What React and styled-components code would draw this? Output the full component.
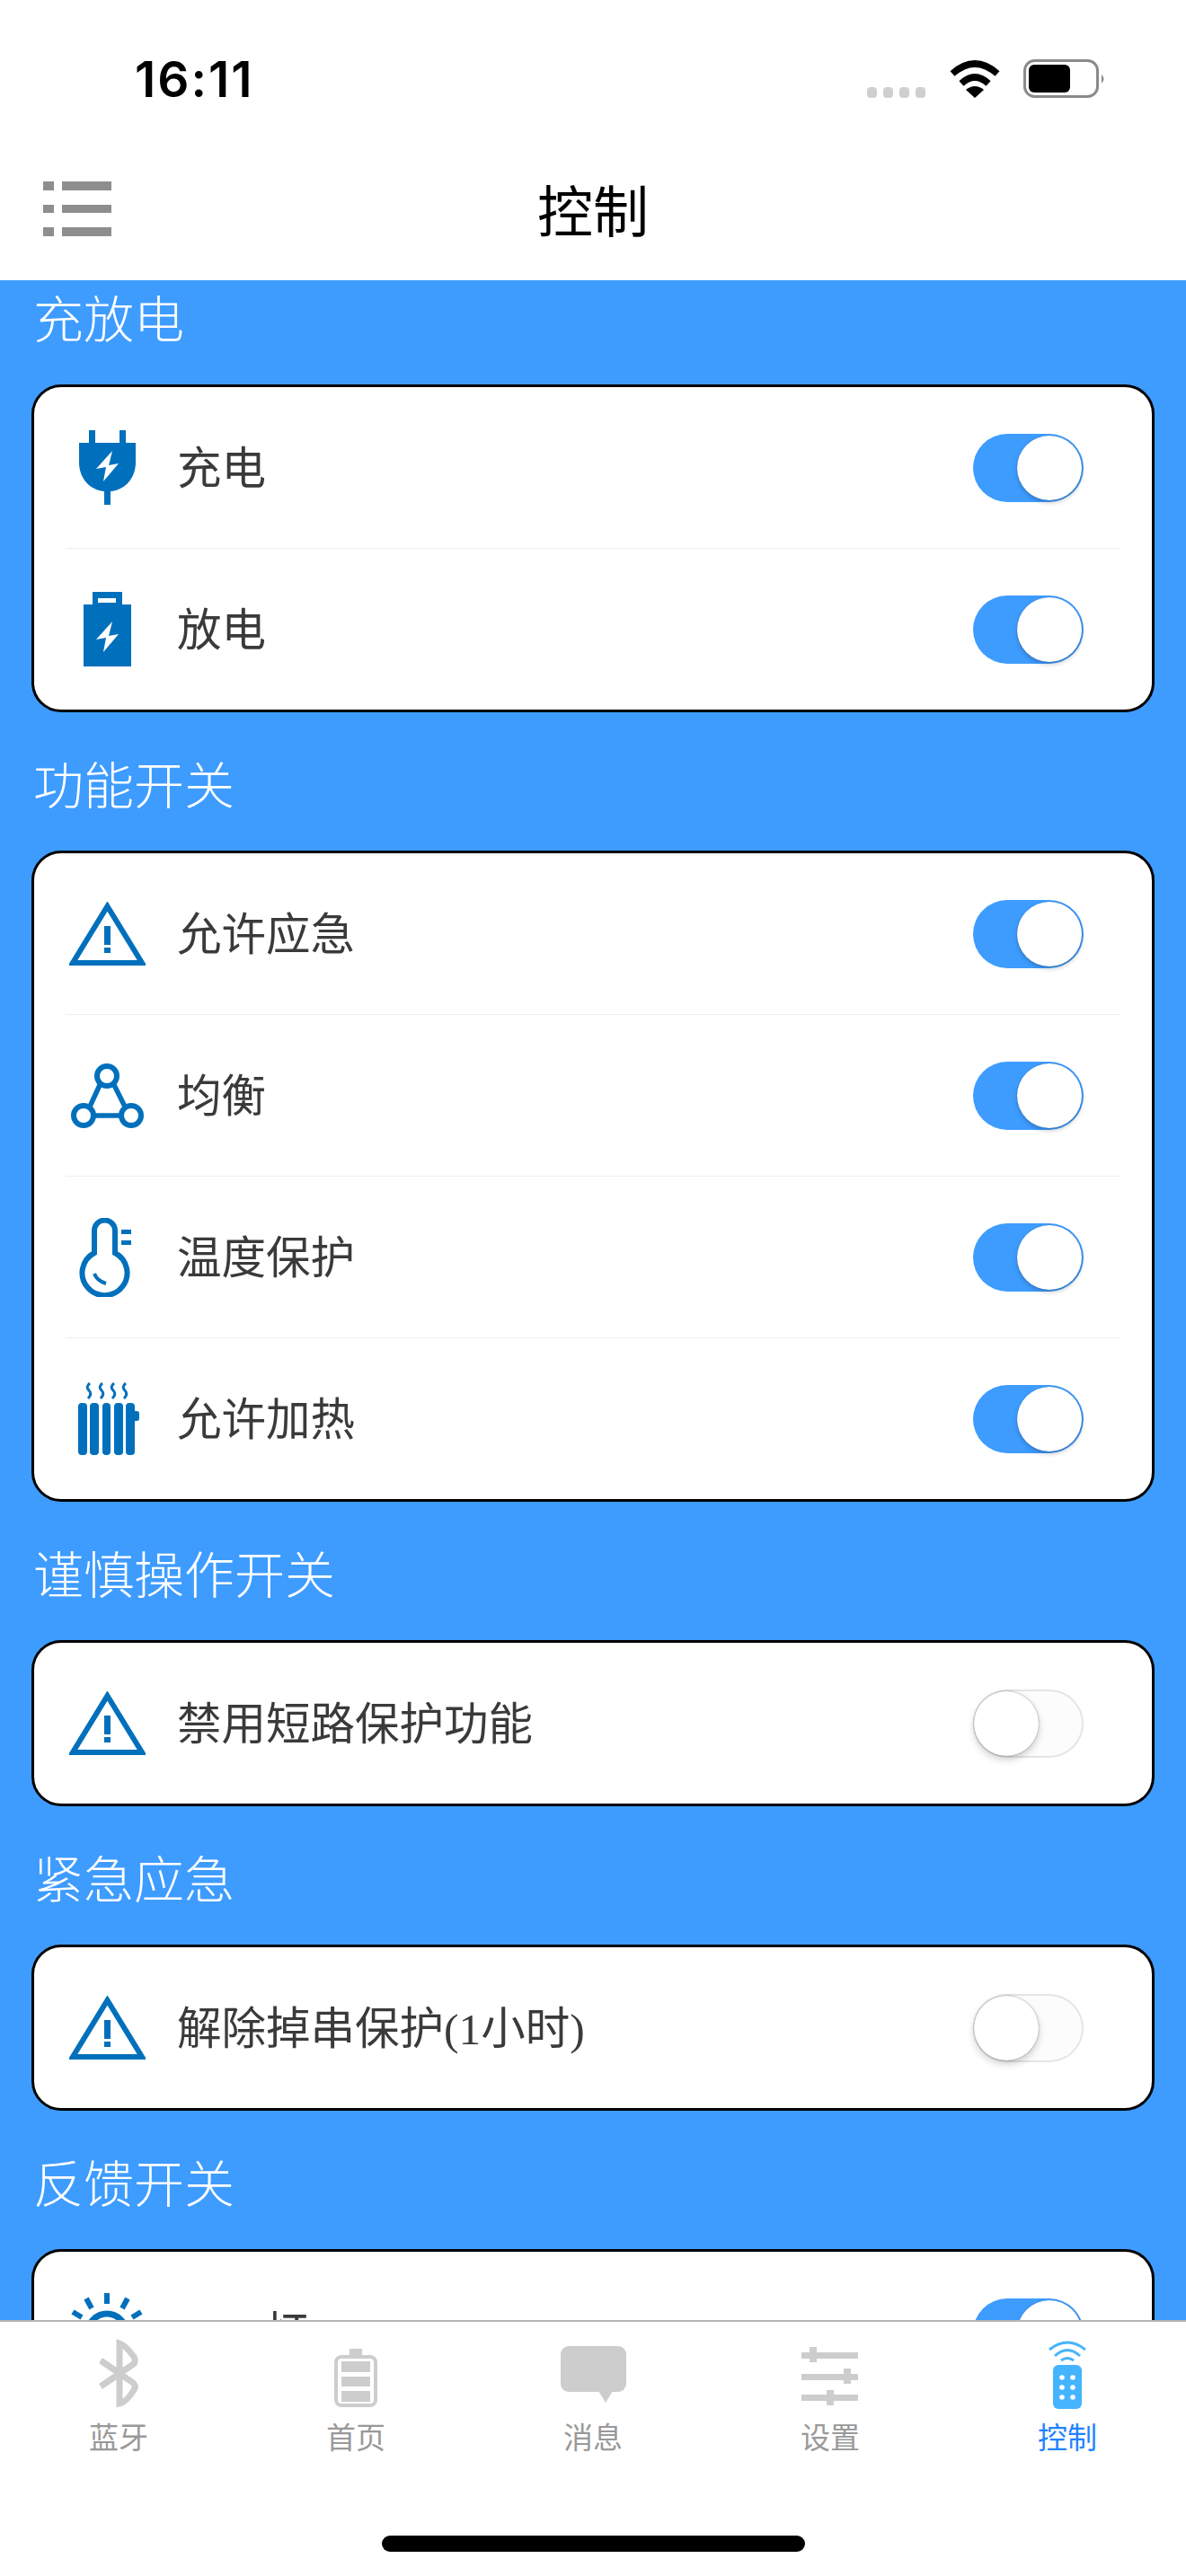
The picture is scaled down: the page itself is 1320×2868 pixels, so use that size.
import React from "react";
import styled, { createGlobalStyle } from "styled-components";

const CJK = '"Noto Sans CJK SC", sans-serif';
const BLUE = "#3e9cff";
const ICON = "#0070bc";

const GlobalStyle = createGlobalStyle`
  html, body {
    margin: 0;
    padding: 0;
    background: #fff;
  }
`;

const Page = styled.div`
  width: 1320px;
  height: 2868px;
  display: flex;
  flex-direction: column;
  overflow: hidden;
  font-family: ${CJK};
`;

const Header = styled.header`
  height: 312px;
  flex: none;
  background: #fff;
`;

const StatusBar = styled.div`
  height: 152px;
  box-sizing: border-box;
  padding: 60px 89px 0 150px;
  display: flex;
  justify-content: space-between;
  align-items: flex-start;
`;

const Time = styled.div`
  font-family: Inter, sans-serif;
  font-weight: 600;
  font-size: 55px;
  line-height: 56px;
  letter-spacing: 2px;
  color: #000;
`;

const StatusIcons = styled.div`
  display: flex;
  align-items: flex-end;
  margin-top: 6px;
  height: 43px;
`;

const SignalDots = styled.div`
  display: flex;
  gap: 7px;
  margin-right: 27px;
`;

const SignalDot = styled.span`
  width: 11px;
  height: 12px;
  border-radius: 4px;
  background: #cfcfcf;
`;

const WifiSvg = styled.svg`
  margin-right: 26px;
`;

const NavBar = styled.nav`
  height: 160px;
  display: grid;
  grid-template-columns: 1fr auto 1fr;
  align-items: center;
  padding-left: 48px;
  padding-right: 48px;
`;

const NavTitle = styled.h1`
  margin: 0;
  font-weight: 400;
  font-size: 62px;
  line-height: 70px;
  color: #000;
`;

const Content = styled.main`
  flex: 1;
  min-height: 0;
  overflow: hidden;
  background: ${BLUE};
`;

const ScrollArea = styled.div`
  margin-top: -38px;
  padding: 0 35px;
`;

const SectionTitle = styled.h2`
  margin: 0;
  height: 154px;
  box-sizing: border-box;
  padding: 1px 0 0 2px;
  display: flex;
  align-items: center;
  font-weight: 300;
  font-size: 56px;
  color: #fff;
`;

const Card = styled.section`
  background: #fff;
  border: 3px solid #000;
  border-radius: 33px;
`;

const Row = styled.div`
  height: 179px;
  margin: 0 35px;
  display: flex;
  align-items: center;

  & + & {
    border-top: 1px solid #efefef;
  }
`;

const IconSlot = styled.div`
  width: 92px;
  flex: none;
  display: flex;
  justify-content: center;
  align-items: center;
  transform: translateX(${(p) => p.$shift || 0}px);
`;

const Label = styled.span`
  margin: 4px 0 0 32px;
  font-family: "Liberation Serif", ${CJK};
  font-size: 49.500px;
  font-weight: 400;
  color: #3a3a3a;
  line-height: 60px;
`;

const Track = styled.div`
  margin-left: auto;
  margin-right: 41px;
  width: 123px;
  height: 76px;
  box-sizing: border-box;
  border-radius: 38px;
  display: flex;
  align-items: center;
  justify-content: ${(p) => (p.$on ? "flex-end" : "flex-start")};
  padding: 0 2px 0 1px;
  background: ${(p) => (p.$on ? BLUE : "#fcfcfc")};
  box-shadow: ${(p) => (p.$on ? "none" : "inset 0 0 0 2px #e5e5e5")};
`;

const Knob = styled.span`
  width: 72px;
  height: 72px;
  border-radius: 50%;
  background: #fff;
  box-shadow: ${(p) =>
    p.$on
      ? "0 3px 5px rgba(0, 0, 0, 0.2), 0 0 1px rgba(0, 0, 0, 0.35)"
      : "0 4px 8px rgba(0, 0, 0, 0.2), 0 0 2px rgba(0, 0, 0, 0.4)"};
`;

const TabBar = styled.footer`
  height: 285px;
  flex: none;
  box-sizing: border-box;
  border-top: 2px solid #b4b4b4;
  background: #fff;
  padding-top: 18px;
  position: relative;
  z-index: 1;
`;

const TabRow = styled.div`
  display: grid;
  grid-template-columns: repeat(5, 1fr);
`;

const Tab = styled.div`
  display: flex;
  flex-direction: column;
  align-items: center;
`;

const TabLabel = styled.span`
  margin-top: 9px;
  font-size: 33px;
  line-height: 40px;
  font-weight: 400;
  color: ${(p) => (p.$active ? "#1f83ff" : "#999")};
`;

const HomeBar = styled.div`
  width: 471px;
  height: 18px;
  margin: 91px auto 0;
  border-radius: 9px;
  background: #000;
`;

const Wifi = () => (
  <WifiSvg width="56" height="42" viewBox="0 0 56 42">
    <path d="M3 15 Q28 -7 53 15" fill="none" stroke="#000" strokeWidth="7.5" />
    <path d="M13 26 Q28 12 43 26" fill="none" stroke="#000" strokeWidth="7.5" />
    <path d="M18 33 Q28 25 38 33 L28 42Z" fill="#000" />
  </WifiSvg>
);

const Battery = () => (
  <svg width="92" height="43" viewBox="0 0 92 43">
    <rect x="1.5" y="1.5" width="81" height="40" rx="11" fill="none" stroke="#8a8a8a" strokeWidth="3" />
    <rect x="6" y="6" width="46" height="31" rx="6" fill="#000" />
    <path d="M87 17 Q92 21.500 87 27Z" fill="#8a8a8a" />
  </svg>
);

const MenuIcon = () => (
  <svg width="76" height="61" viewBox="0 0 76 61" fill="#8e8e8e">
    <rect x="0" y="0" width="12" height="10" />
    <rect x="21" y="0" width="55" height="10" />
    <rect x="0" y="26" width="12" height="9" />
    <rect x="21" y="26" width="55" height="9" />
    <rect x="0" y="51" width="12" height="10" />
    <rect x="21" y="51" width="55" height="10" />
  </svg>
);

const BOLT = "M37 23 L19 43 L30 41 L27 57 L44 37 L33 39 Z";

const PlugIcon = () => (
  <svg width="63" height="83" viewBox="0 0 63 83">
    <path
      d="M11 0H18V14H45V0H52V14H63V36C63 54 50 67 35 68V83H28V68C13 67 0 54 0 36V14H11Z"
      fill={ICON}
    />
    <path d={BOLT} fill="#fff" />
  </svg>
);

const PackIcon = () => (
  <svg width="53" height="83" viewBox="0 0 53 83">
    <path
      fillRule="evenodd"
      d="M10 0H43V14H53V83H0V14H10ZM16 7V12H36V7Z"
      fill={ICON}
    />
    <path d={BOLT} transform="translate(-5 10)" fill="#fff" />
  </svg>
);

const WarningIcon = () => (
  <svg width="85" height="72" viewBox="0 0 85 72">
    <path d="M42.500 5 L81 68 H4 Z" fill="none" stroke={ICON} strokeWidth="6" />
    <rect x="39" y="27" width="7" height="21" fill={ICON} />
    <rect x="39" y="51" width="7" height="6" fill={ICON} />
  </svg>
);

const BalanceIcon = () => (
  <svg width="81" height="74" viewBox="0 0 81 74" fill="none" stroke={ICON}>
    <path d="M32 25 L21 49 M48 25 L60 49 M25 59 H56" strokeWidth="5.500" />
    <circle cx="40" cy="15" r="11" strokeWidth="6" />
    <circle cx="14" cy="59" r="11" strokeWidth="6" />
    <circle cx="67" cy="59" r="11" strokeWidth="6" />
  </svg>
);

const ThermoIcon = () => (
  <svg width="58" height="88" viewBox="0 0 58 88" fill="none" stroke={ICON}>
    <path
      d="M17 39 V14 A11.500 11.500 0 0 1 40 14 V39 A25 25 0 1 1 17 39Z"
      strokeWidth="6"
    />
    <path d="M17 62 Q20 70 30 73" strokeWidth="4" />
    <path d="M47 15.500 H58 M47 27.500 H58" strokeWidth="5" />
  </svg>
);

const HeaterIcon = () => (
  <svg width="68" height="81" viewBox="0 0 68 81">
    <g fill={ICON}>
      <rect x="0" y="23" width="10" height="58" rx="4" />
      <rect x="13" y="23" width="10" height="58" rx="4" />
      <rect x="27" y="23" width="9" height="58" rx="4" />
      <rect x="40" y="23" width="10" height="58" rx="4" />
      <rect x="53" y="23" width="10" height="58" rx="4" />
      <rect x="60" y="32" width="8" height="11" rx="3" />
    </g>
    <g fill="none" stroke={ICON} strokeWidth="3">
      <path d="M13 1 Q8 5 12 9 Q16 13 11 18" />
      <path d="M27 1 Q22 5 26 9 Q30 13 25 18" />
      <path d="M40 1 Q35 5 39 9 Q43 13 38 18" />
      <path d="M53 1 Q48 5 52 9 Q56 13 51 18" />
    </g>
  </svg>
);

const SunIcon = () => (
  <svg width="92" height="88" viewBox="0 0 92 88" fill="none" stroke={ICON}>
    <path d="M46 0 V12 M23 6 L29 17 M69 6 L63 17 M8 21 L18 27 M84 21 L74 27" strokeWidth="6" />
    <circle cx="46" cy="44" r="21" strokeWidth="7" />
  </svg>
);

const TabIconSvg = styled.svg`
  width: 80px;
  height: 80px;
  display: block;
`;

const BluetoothTab = () => (
  <TabIconSvg viewBox="0 0 80 80">
    <path
      transform="translate(17 2)"
      d="M3 23 L38 47 C42 50 42 53 40 56 C35 64 30 70 24 71 V4 C30 6 35 12 40 19 C42 22 42 26 38 28 L3 52"
      fill="none"
      stroke="#cdcdcd"
      strokeWidth="7"
    />
  </TabIconSvg>
);

const HomeTab = () => (
  <TabIconSvg viewBox="0 0 80 80">
    <g transform="translate(16 12)" fill="#cdcdcd">
      <rect x="17" y="0" width="14" height="9" />
      <rect x="2" y="9" width="44" height="54" rx="6" fill="none" stroke="#cdcdcd" strokeWidth="4" />
      <rect x="8" y="14" width="32" height="12" />
      <rect x="8" y="31" width="32" height="11" />
      <rect x="8" y="47" width="32" height="12" />
    </g>
  </TabIconSvg>
);

const MessageTab = () => (
  <TabIconSvg viewBox="0 0 80 80">
    <rect x="4" y="9" width="73" height="51" rx="9" fill="#cdcdcd" />
    <path d="M46 59 H62 L54 72Z" fill="#cdcdcd" />
  </TabIconSvg>
);

const SettingsTab = () => (
  <TabIconSvg viewBox="0 0 80 80">
    <g fill="#cdcdcd">
      <rect x="8" y="16" width="63" height="7" />
      <rect x="17" y="10" width="8" height="17" />
      <rect x="8" y="40" width="63" height="7" />
      <rect x="55" y="34" width="8" height="17" />
      <rect x="8" y="63" width="63" height="7" />
      <rect x="36" y="58" width="8" height="17" />
    </g>
  </TabIconSvg>
);

const ControlTab = () => (
  <TabIconSvg viewBox="0 0 80 80">
    <g fill="none" stroke="#45b4ff" strokeWidth="3">
      <path d="M20 13 Q40 -3 60 13" />
      <path d="M26 20 Q40 7 54 20" />
      <path d="M33 25 Q40 20 47 25" />
    </g>
    <rect x="24" y="30" width="32" height="49" rx="6" fill="#45b4ff" />
    <g fill="#fff">
      <circle cx="34" cy="44" r="2.800" />
      <circle cx="46" cy="44" r="2.800" />
      <circle cx="34" cy="55" r="2.800" />
      <circle cx="46" cy="55" r="2.800" />
      <circle cx="34" cy="66" r="2.800" />
      <circle cx="46" cy="66" r="2.800" />
    </g>
  </TabIconSvg>
);

const sections = [
  {
    title: "充放电",
    rows: [
      { icon: <PlugIcon />, label: "充电", on: true },
      { icon: <PackIcon />, label: "放电", on: true },
    ],
  },
  {
    title: "功能开关",
    rows: [
      { icon: <WarningIcon />, label: "允许应急", on: true },
      { icon: <BalanceIcon />, label: "均衡", on: true },
      { icon: <ThermoIcon />, shift: -2, label: "温度保护", on: true },
      { icon: <HeaterIcon />, shift: 2, label: "允许加热", on: true },
    ],
  },
  {
    title: "谨慎操作开关",
    rows: [{ icon: <WarningIcon />, label: "禁用短路保护功能", on: false }],
  },
  {
    title: "紧急应急",
    rows: [{ icon: <WarningIcon />, label: "解除掉串保护(1小时)", on: false }],
  },
  {
    title: "反馈开关",
    rows: [{ icon: <SunIcon />, label: "LED灯", on: true }],
  },
];

const tabs = [
  { label: "蓝牙", icon: <BluetoothTab /> },
  { label: "首页", icon: <HomeTab /> },
  { label: "消息", icon: <MessageTab /> },
  { label: "设置", icon: <SettingsTab /> },
  { label: "控制", icon: <ControlTab />, active: true },
];

export default function App() {
  return (
    <Page>
      <GlobalStyle />
      <Header>
        <StatusBar>
          <Time>16:11</Time>
          <StatusIcons>
            <SignalDots>
              {[0, 1, 2, 3].map((i) => (
                <SignalDot key={i} />
              ))}
            </SignalDots>
            <Wifi />
            <Battery />
          </StatusIcons>
        </StatusBar>
        <NavBar>
          <MenuIcon />
          <NavTitle>控制</NavTitle>
        </NavBar>
      </Header>
      <Content>
        <ScrollArea>
          {sections.map((section) => (
            <div key={section.title}>
              <SectionTitle>{section.title}</SectionTitle>
              <Card>
                {section.rows.map((row) => (
                  <Row key={row.label}>
                    <IconSlot $shift={row.shift}>{row.icon}</IconSlot>
                    <Label>{row.label}</Label>
                    <Track $on={row.on}>
                      <Knob $on={row.on} />
                    </Track>
                  </Row>
                ))}
              </Card>
            </div>
          ))}
        </ScrollArea>
      </Content>
      <TabBar>
        <TabRow>
          {tabs.map((tab) => (
            <Tab key={tab.label}>
              {tab.icon}
              <TabLabel $active={tab.active}>{tab.label}</TabLabel>
            </Tab>
          ))}
        </TabRow>
        <HomeBar />
      </TabBar>
    </Page>
  );
}
